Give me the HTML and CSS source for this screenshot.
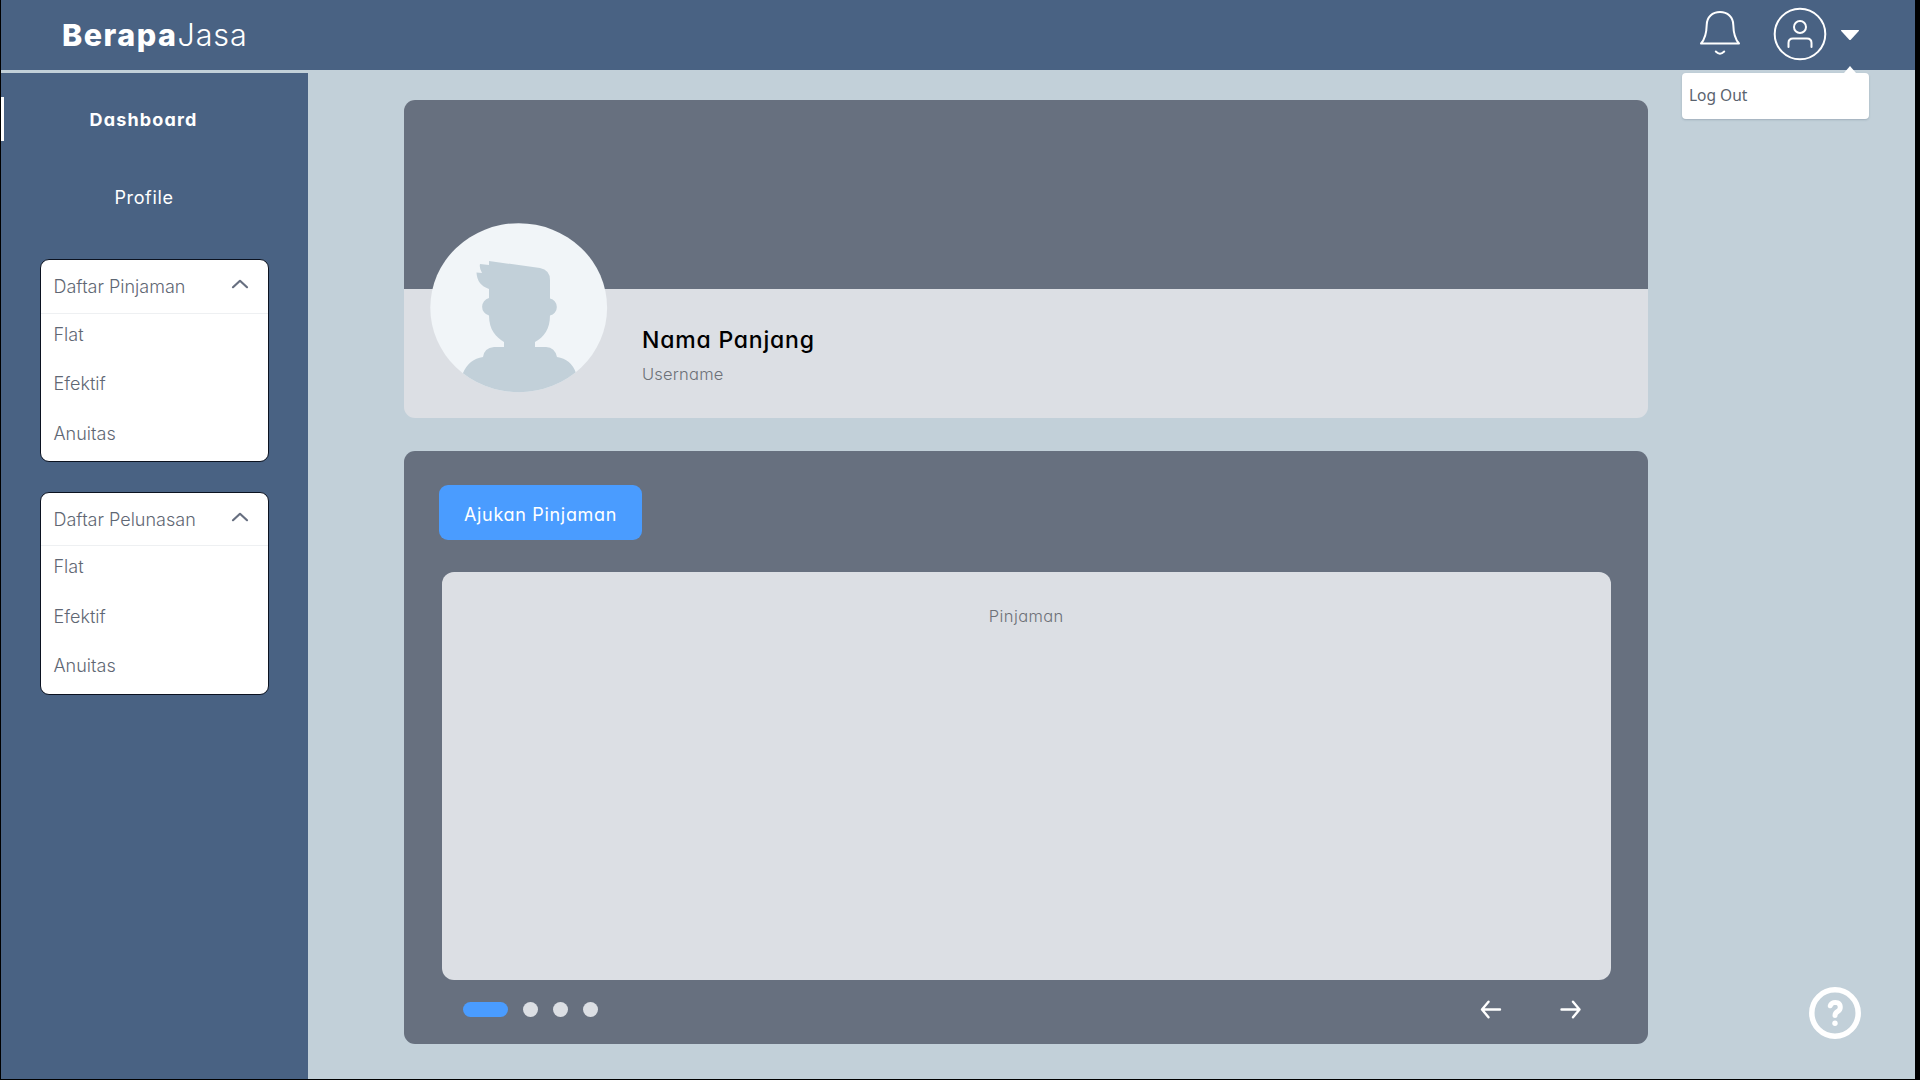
FILE: index.html
```html
<!DOCTYPE html>
<html lang="id">
<head>
<meta charset="utf-8">
<title>BerapaJasa</title>
<link rel="stylesheet" href="styles.css">
</head>
<body>
<div class="page">
  <header class="topbar">
    <div class="logo"><b>Berapa</b><span>Jasa</span></div>
    <div class="actions">
      <svg class="bell" width="42" height="48" viewBox="0 0 42 48" fill="none" stroke="#fff" stroke-width="2" stroke-linecap="round" stroke-linejoin="round"><path d="M2 34.500H40C36 30 34.500 25 34.300 16C34.200 8 28.500 3 21 3S7.800 8 7.700 16C7.500 25 6 30 2 34.500Z"/><path d="M16.800 42.500Q21 46.800 25.200 42.500"/></svg>
      <svg class="user" width="54" height="54" viewBox="0 0 54 54" fill="none" stroke="#fff" stroke-width="2" stroke-linecap="round"><circle cx="27" cy="27" r="25.300"/><circle cx="27" cy="20" r="6"/><path d="M15.500 40V36Q15.500 31.500 20 31.500H34Q38.500 31.500 38.500 36V40"/></svg>
      <svg class="caret" width="20" height="12" viewBox="0 0 20 12" fill="#fff"><path d="M1.500 1H18.500Q19.500 1 18.800 1.900L11 10.400Q10 11.400 9 10.400L1.200 1.900Q.5 1 1.500 1Z"/></svg>
    </div>
    <div class="menu"><a>Log Out</a></div>
  </header>
  <div class="body">
    <aside class="sidebar">
      <a class="nav active">Dashboard</a>
      <a class="nav">Profile</a>
      <section class="group">
        <h2><span>Daftar Pinjaman</span><svg width="18" height="10" viewBox="0 0 18 10" fill="none" stroke="#676f80" stroke-width="2.200" stroke-linecap="round" stroke-linejoin="round"><path d="M2 8.200L9 1.800L16 8.200"/></svg></h2>
        <a>Flat</a><a>Efektif</a><a>Anuitas</a>
      </section>
      <section class="group">
        <h2><span>Daftar Pelunasan</span><svg width="18" height="10" viewBox="0 0 18 10" fill="none" stroke="#676f80" stroke-width="2.200" stroke-linecap="round" stroke-linejoin="round"><path d="M2 8.200L9 1.800L16 8.200"/></svg></h2>
        <a>Flat</a><a>Efektif</a><a>Anuitas</a>
      </section>
    </aside>
    <main class="content">
      <section class="profile">
        <div class="cover"></div>
        <div class="identity">
          <svg class="avatar" width="178" height="170" viewBox="0 0 178 170"><defs><clipPath id="face"><ellipse cx="88.700" cy="84.700" rx="88.400" ry="84.500"/></clipPath></defs><ellipse cx="88.700" cy="84.700" rx="88.400" ry="84.500" fill="#f1f5f8"/><g clip-path="url(#face)" fill="#c2d0d9"><path d="M59 38L110 45Q120 47 120 57V75.500A8.700 8.700 0 0 1 120 92.500C120 106 114 114 105 119V124H116Q125 124.500 127 134Q141 136 146 150V170H33V150Q39 136 53 134Q54 125 64 124H74V119C66 114 59 107 59 92.500A9 9 0 0 1 59 75V66Q47 62 46.500 49.500L52 50Q49 45 50 41L59 42Z"/></g></svg>
          <div class="names"><h1>Nama Panjang</h1><p>Username</p></div>
        </div>
      </section>
      <section class="loans">
        <button class="apply">Ajukan Pinjaman</button>
        <div class="slide">Pinjaman</div>
        <div class="pager">
          <div class="dots"><i class="on"></i><i></i><i></i><i></i></div>
          <div class="arrows">
            <svg width="22" height="20" viewBox="0 0 22 20" fill="none" stroke="#fff" stroke-width="2.400" stroke-linecap="round" stroke-linejoin="round"><path d="M20 9.500H2M8.500 1.700L2 9.500L8.500 17.300"/></svg>
            <svg width="22" height="20" viewBox="0 0 22 20" fill="none" stroke="#fff" stroke-width="2.400" stroke-linecap="round" stroke-linejoin="round"><path d="M1.500 9.500H19.500M13 1.700L19.500 9.500L13 17.300"/></svg>
          </div>
        </div>
      </section>
    </main>
    <svg class="help" width="52" height="52" viewBox="0 0 52 52" fill="none" stroke="#fff" stroke-linecap="round" stroke-linejoin="round"><circle cx="26" cy="26" r="23.200" stroke-width="5.500"/><path d="M21.300 18.800C22.500 15.200 26.500 15 28.500 15.800C32.200 17.500 32 22.500 29 24.200C27 25.300 26 26 26 28.500" stroke-width="5"/><circle cx="26" cy="36.300" r="2.700" fill="#fff" stroke="none"/></svg>
  </div>
</div>
</body>
</html>
```
FILE: styles.css
```css
* { box-sizing: border-box; }
body { margin: 0; background: #000; font-family: Inter, "Liberation Sans", sans-serif; }
h1, h2, p { margin: 0; font-weight: 400; }
svg { display: block; flex: none; }
.page { width: 1914px; height: 1079px; margin-left: 1px; background: #c2d0d9; overflow: hidden; }

.topbar { position: relative; height: 70px; background: #496283; display: flex; justify-content: space-between; padding: 0 54px 0 61px; }
.logo { font-size: 30.500px; line-height: 69px; color: #fff; white-space: nowrap; }
.logo b { font-weight: 800; letter-spacing: 1.500px; }
.logo span { font-weight: 300; letter-spacing: .9px; }
.actions { display: flex; align-items: flex-start; }
.bell { margin: 9px 32px 0 0; }
.user { margin: 7px 14px 0 0; }
.caret { margin: 29px 1px 0 -1px; }
.menu { position: absolute; right: 46.500px; top: 73px; width: 187px; height: 46px; padding-left: 7.500px; border-radius: 4px; background: #fff; box-shadow: 0 1px 2px rgba(60, 80, 100, .25); font: 15.500px/44px "Noto Sans", sans-serif; color: #5a636e; z-index: 2; }
.menu::before { content: ""; position: absolute; right: 13px; top: -7px; border: solid transparent; border-width: 0 6px 7px; border-bottom-color: #fff; }

.body { display: flex; height: 1006px; margin-top: 3px; }
.sidebar { width: 307px; background: #496283; padding-top: 24px; }
.nav { display: block; height: 44px; margin-bottom: 34px; padding: 1px 21px 0 0; text-align: center; font-size: 18px; line-height: 44px; letter-spacing: .65px; color: #fff; font-feature-settings: "cv11"; }
.active { border-left: 3px solid #fff; padding-right: 25px; font-weight: 700; letter-spacing: 1.150px; }
.nav + .group { margin-top: 40px; }
.group { width: 229px; height: 203px; margin: 0 0 29.500px 38.500px; border: 1px solid #0b1220; border-radius: 9px; background: #fff; color: #5f6774; font-size: 18px; font-weight: 300; }
.group h2 { display: flex; justify-content: space-between; height: 53.500px; padding: 0 19px 0 13px; border-bottom: 1px solid #eef0f2; font-size: 18px; font-weight: 300; line-height: 54px; }
.group h2 svg { margin-top: 19px; }
.group a { display: block; padding-left: 13px; line-height: 49.700px; }
.group h2 + a { margin-top: -4px; }

.content { width: 1244px; margin-left: 96px; padding-top: 27px; font-feature-settings: "cv11"; }
.profile { height: 318px; border-radius: 11px; overflow: hidden; background: #dcdfe4; }
.cover { height: 189px; background: #67707f; }
.identity { display: flex; padding-left: 26px; }
.avatar { position: relative; margin-top: -66px; }
.names { padding: 36px 0 0 34px; }
.names h1 { font-size: 23px; line-height: 30px; font-weight: 500; letter-spacing: .8px; color: #000; }
.names p { font-size: 16.500px; line-height: 38px; font-weight: 300; letter-spacing: .2px; color: #6d7178; }
.loans { height: 592.500px; margin-top: 33px; border-radius: 11px; background: #67707f; padding: 34px 37px 0 35px; }
.apply { display: block; width: 203px; height: 55px; border: 0; border-radius: 9px; background: #4a9cff; color: #fff; font: 400 18px/55px Inter, sans-serif; letter-spacing: .68px; font-feature-settings: "cv11"; padding: 2px 0 0; }
.slide { height: 408px; margin: 32px 0 0 2.500px; border-radius: 12px; background: #dcdfe4; padding-top: 29px; text-align: center; font-size: 16.500px; line-height: 31px; font-weight: 300; letter-spacing: .4px; color: #6d7178; }
.pager { display: flex; justify-content: space-between; align-items: center; height: 59px; padding: 0 29px 0 24px; }
.dots { display: flex; gap: 15px; }
.dots i { width: 15px; height: 15px; border-radius: 8px; background: #dcdfe4; }
.dots .on { width: 45px; background: #4a9cff; }
.arrows { display: flex; gap: 58px; }
.help { margin: 913.500px 0 0 161px; }
```
